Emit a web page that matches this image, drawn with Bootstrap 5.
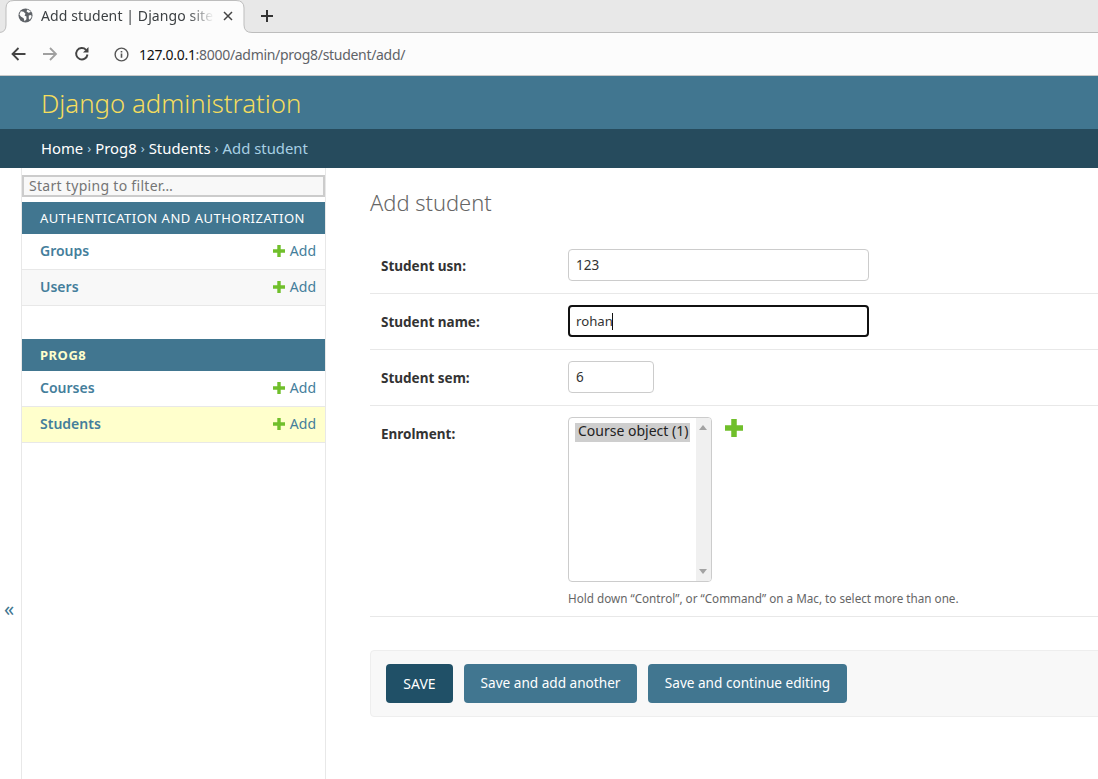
<!DOCTYPE html>
<html lang="en">
<head>
<meta charset="utf-8">
<title>Add student | Django site admin</title>
<link href="https://cdn.jsdelivr.net/npm/bootstrap@5.3.0/dist/css/bootstrap.min.css" rel="stylesheet">
<style>
html,body{height:100%;overflow:hidden}
body{font-family:"Noto Sans","Open Sans",sans-serif;font-size:14px;color:#333;background:#fff}
.page-shell{height:779px;width:1098px;overflow:hidden}
.tabstrip{height:33px;position:relative;flex:none}
.strip-art{position:absolute;left:0;top:0}
.tab-item{position:relative;height:33px;font-size:14px;color:#3c4043;padding:0 0 2px 18px;gap:8px;width:245px}
.tab-title{width:173px;flex:none;white-space:nowrap;letter-spacing:.1px;-webkit-mask-image:linear-gradient(90deg,#000 85%,transparent 100%);mask-image:linear-gradient(90deg,#000 85%,transparent 100%)}
.tab-x{margin-left:1px}
.newtab{position:absolute;left:260px;top:9px}
.toolbar{height:43px;background:#fcfcfc;padding-left:11px;border-bottom:1px solid #c9c9c9;flex:none}
.urlbar{font-size:14px;color:#5f6368;margin-left:24px;gap:10px;letter-spacing:-.3px}
.urlbar b{font-weight:400;color:#111}
.nav-gap{margin-left:16px}
.site-head{height:53px;background:#417690;padding:2px 0 0 41px;color:#f5dd5d;font-size:25.8px;font-weight:300;flex:none}
.crumbs{height:39px;background:#264b5d;padding-left:41px;color:#a8d0e4;font-size:14.85px;flex:none}
.crumbs a{color:#fff;text-decoration:none}
.crumbs span{margin:0 4px;font-size:13px}
.main-row{height:611px}
.toggle-col{width:22px;border-right:1px solid #e8e8e8;color:#417690;font-size:20px;padding:431px 3px 0 0;line-height:1;text-align:center;flex:none}
.side-col{width:304px;flex:none;border-right:1px solid #e8e8e8;padding-top:7px}
.filter-box{display:block;width:303px;height:22px;border:2px solid #ccc;background:#f8f8f8;font-size:14px;letter-spacing:.3px;padding:0 5px 2px;color:#666;line-height:18px;margin-bottom:5px;outline:0}
.filter-box::placeholder{color:#757575;opacity:1}
.app-cap{height:32px;background:#417690;color:#fff;font-size:13px;padding:2px 0 0 18px;letter-spacing:.5px;text-transform:uppercase}
.app-cap.current{color:#ffc;font-weight:700;margin-top:33px}
.mod-row{height:36px;border-bottom:1px solid #e8e8e8;padding:0 9px 2px 18px;color:#447e9b;font-size:14px}
.mod-row strong{font-weight:600}
.mod-row.alt{background:#f8f8f8}
.mod-row.on{background:#ffc}
.add-link{color:#447e9b;gap:5px}
.content-col{padding:0 0 0 44px;width:772px;flex:none}
.page-ttl{font-size:21.9px;font-weight:300;color:#666;margin:21px 0 0;line-height:28px;height:49px}
.form-line{border-bottom:1px solid #e8e8e8;padding:11px 0 11px 11px;display:flex;width:728px;height:56px}
.form-line label{width:187px;flex:none;font-weight:700;color:#333;font-size:13.5px;padding-top:7px}
.form-line input{height:32px;border:1px solid #ccc;border-radius:4px;padding:0 7px;font:13.5px "Noto Sans",sans-serif;color:#333;width:301px;background:#fff;outline:0}
.form-line input.short{width:86px}
.form-line input.active{border:2px solid #111;padding:0 6px;font-size:13.2px}
.form-line.tall{height:211px}
.caret-wrap{position:relative;height:32px}
.fake-caret{position:absolute;left:44px;top:8px;width:1px;height:17px;background:#111}
.list-box{width:144px;height:165px;border:1px solid #ccc;border-radius:4px;display:flex;overflow:hidden;padding:5px 0 0 6px;position:relative}
.opt-sel{background:#cecece;height:19px;line-height:16px;padding:0 0 0 3px;font-size:14px;width:115px;white-space:nowrap;letter-spacing:0;color:#222}
.fake-sb{position:absolute;right:0;top:0;bottom:0;width:15px;background:#f0f0f0}
.sb-up,.sb-dn{position:absolute;left:3px;border-left:4px solid transparent;border-right:4px solid transparent}
.sb-up{top:7px;border-bottom:5px solid #a3a3a3}
.sb-dn{bottom:7px;border-top:5px solid #a3a3a3}
.help-line{font-size:11.7px;color:#666;margin-top:8px;line-height:16px;white-space:nowrap}
.plus-big{margin-left:12px;margin-top:1px}
.submit-bar{margin-top:33px;width:740px;height:67px;background:#f8f8f8;border:1px solid #eee;border-radius:4px 0 0 4px;padding:13px 15px;gap:11px}
.act-btn{height:39px;border:0;border-radius:4px;background:#417690;color:#fff;font-size:13.6px;padding:0 16px;white-space:nowrap}
.act-btn.prim{background:#205067;width:67px;padding:0;font-size:14px;text-transform:uppercase}
.act-btn.mid{width:173px;padding:0}
.act-btn.last{width:199px;padding:0}
</style>
</head>
<body>
<div class="page-shell d-flex flex-column">
  <div class="tabstrip">
    <svg class="strip-art" width="1098" height="33" viewBox="0 0 1098 33"><rect width="1098" height="33" fill="#e8e8e8"/><path d="M-1 32.500Q6 32.500 6 25V8Q6 .5 14 .5H236Q244 .5 244 8V25Q244 32.500 252 32.500H1098V33H-1z" fill="#fcfcfc"/><path d="M-1 32.500Q6 32.500 6 25V8Q6 .5 14 .5H236Q244 .5 244 8V25Q244 32.500 252 32.500H1098" fill="none" stroke="#bdbdbd"/></svg>
    <div class="tab-item d-flex align-items-center">
      <svg width="15" height="15" viewBox="0 0 16 16"><circle cx="8" cy="8" r="7.500" fill="#5f6368"/><path d="M3 3.500l3 .5 2 2-1 2 2 1v3l-2 2-1-3-3-2-1.500-2zM10 1.500l-1 2 2 1.500 2-.5.5-1zM11.500 8l2.500-.5.5 2-2 3-1-1z" fill="#fff"/></svg>
      <span class="tab-title">Add student | Django site</span>
      <svg class="tab-x" width="10" height="10" viewBox="0 0 10 10"><path d="M1 1l8 8M9 1l-8 8" stroke="#444" stroke-width="1.500"/></svg>
    </div>
    <svg class="newtab" width="14" height="14" viewBox="0 0 14 14"><path d="M7 1v12M1 7h12" stroke="#333" stroke-width="2"/></svg>
  </div>
  <div class="toolbar d-flex align-items-center">
    <svg width="15" height="14" viewBox="0 0 15 14"><path d="M14.500 7H2M7.500 1L1.500 7l6 6" fill="none" stroke="#444" stroke-width="1.800"/></svg>
    <svg class="nav-gap" width="16" height="14" viewBox="0 0 15 14"><path d="M.5 7H13M7.500 1l6 6-6 6" fill="none" stroke="#a0a0a0" stroke-width="1.800"/></svg>
    <svg class="nav-gap" width="16" height="16" viewBox="0 0 16 16"><path d="M13.500 8.500A5.700 5.700 0 1 1 12 3.800" fill="none" stroke="#444" stroke-width="1.900"/><path d="M14.500 1v5.500H9z" fill="#444"/></svg>
    <div class="urlbar d-flex align-items-center">
      <svg width="15" height="15" viewBox="0 0 16 16"><circle cx="8" cy="8" r="6.800" fill="none" stroke="#555" stroke-width="1.500"/><path d="M8 7v4.500M8 4.300v1.600" stroke="#555" stroke-width="1.700"/></svg>
      <span><b>127.0.0.1</b>:8000/admin/prog8/student/add/</span>
    </div>
  </div>
  <div class="site-head d-flex align-items-center">Django administration</div>
  <div class="crumbs d-flex align-items-center"><a href="#">Home</a><span>›</span><a href="#">Prog8</a><span>›</span><a href="#">Students</a><span>›</span>Add student</div>
  <div class="main-row d-flex">
    <div class="toggle-col">«</div>
    <div class="side-col">
      <input class="filter-box" placeholder="Start typing to filter…" aria-label="Filter">
      <div class="app-cap d-flex align-items-center">Authentication and Authorization</div>
      <div class="mod-row d-flex align-items-center justify-content-between"><strong>Groups</strong><span class="add-link d-flex align-items-center"><svg width="12" height="12" viewBox="0 0 12 12"><path d="M6 0v12M0 6h12" stroke="#70bf2b" stroke-width="3.400"/></svg>Add</span></div>
      <div class="mod-row alt d-flex align-items-center justify-content-between"><strong>Users</strong><span class="add-link d-flex align-items-center"><svg width="12" height="12" viewBox="0 0 12 12"><path d="M6 0v12M0 6h12" stroke="#70bf2b" stroke-width="3.400"/></svg>Add</span></div>
      <div class="app-cap current d-flex align-items-center">Prog8</div>
      <div class="mod-row d-flex align-items-center justify-content-between"><strong>Courses</strong><span class="add-link d-flex align-items-center"><svg width="12" height="12" viewBox="0 0 12 12"><path d="M6 0v12M0 6h12" stroke="#70bf2b" stroke-width="3.400"/></svg>Add</span></div>
      <div class="mod-row on d-flex align-items-center justify-content-between"><strong>Students</strong><span class="add-link d-flex align-items-center"><svg width="12" height="12" viewBox="0 0 12 12"><path d="M6 0v12M0 6h12" stroke="#70bf2b" stroke-width="3.400"/></svg>Add</span></div>
    </div>
    <div class="content-col">
      <h1 class="page-ttl">Add student</h1>
      <form>
        <div class="form-line"><label>Student usn:</label><input value="123" aria-label="Student usn"></div>
        <div class="form-line"><label>Student name:</label><div class="caret-wrap"><input class="active" value="rohan" aria-label="Student name"><div class="fake-caret"></div></div></div>
        <div class="form-line"><label>Student sem:</label><input class="short" value="6" aria-label="Student sem"></div>
        <div class="form-line tall"><label>Enrolment:</label>
          <div>
            <div class="d-flex align-items-start">
              <div class="list-box"><div class="opt-sel">Course object (1)</div><div class="fake-sb"><div class="sb-up"></div><div class="sb-dn"></div></div></div>
              <svg class="plus-big" width="20" height="20" viewBox="0 0 20 20"><path d="M10 1v18M1 10h18" stroke="#70bf2b" stroke-width="5.500"/></svg>
            </div>
            <div class="help-line">Hold down “Control”, or “Command” on a Mac, to select more than one.</div>
          </div>
        </div>
        <div class="submit-bar d-flex">
          <button type="button" class="act-btn prim">Save</button>
          <button type="button" class="act-btn mid">Save and add another</button>
          <button type="button" class="act-btn last">Save and continue editing</button>
        </div>
      </form>
    </div>
  </div>
</div>
</body>
</html>
